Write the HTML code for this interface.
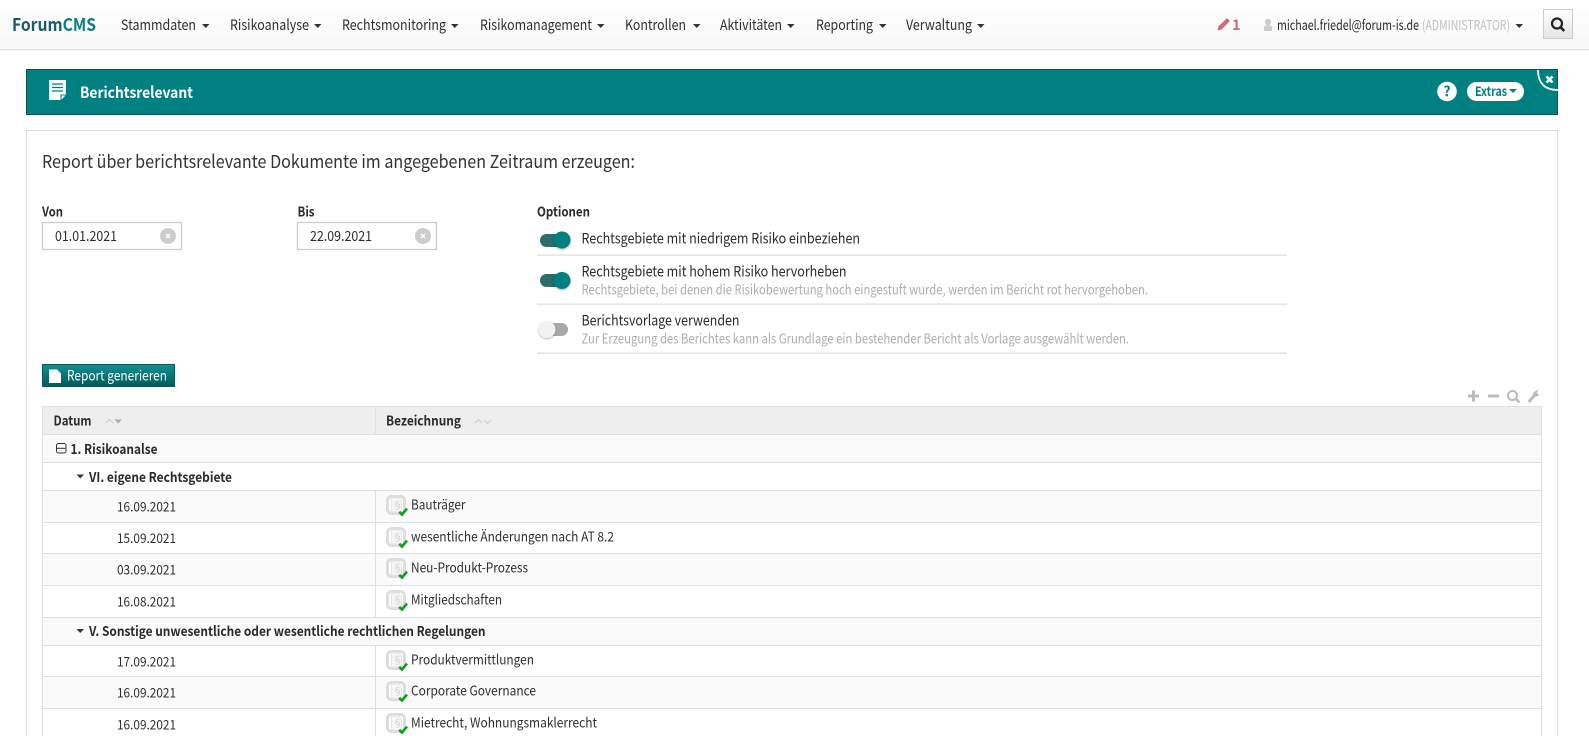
<!DOCTYPE html>
<html lang="de"><head><meta charset="utf-8"><title>Berichtsrelevant</title>
<style>
html,body{margin:0;padding:0;background:#fff;width:1589px;height:736px;overflow:hidden}
svg{display:block}
text{font-family:"Noto Sans CJK JP","Liberation Sans",sans-serif;fill:#2b2b2b;font-size:14px;white-space:pre}
.b{font-weight:700}
.nav{font-size:14.5px;fill:#2f2f2f}
.sub{font-size:13.5px;fill:#adadad}
.opt{font-size:14.5px;fill:#2b2b2b}
.th{font-weight:700;font-size:13.5px;fill:#2b2b2b}
.td{font-size:13.5px;fill:#2f2f2f}
</style></head><body>
<svg width="1589" height="736" viewBox="0 0 1589 736" xmlns="http://www.w3.org/2000/svg">
<defs>
<linearGradient id="n" x1="0" y1="0" x2="0" y2="1"><stop offset="0" stop-color="#fff"/><stop offset="1" stop-color="#f7f7f7"/></linearGradient>
<linearGradient id="s" x1="0" y1="0" x2="0" y2="1"><stop offset="0" stop-color="#fff"/><stop offset="1" stop-color="#e4e4e4"/></linearGradient>
<linearGradient id="g" x1="0" y1="0" x2="0" y2="1"><stop offset="0" stop-color="#129090"/><stop offset="1" stop-color="#005a5a"/></linearGradient>
<filter id="sh" x="-30%" y="-30%" width="160%" height="160%"><feDropShadow dx="0" dy="1" stdDeviation="1" flood-color="#000" flood-opacity=".3"/></filter>
<g id="doc">
<rect x="1.500" y="1.500" width="17" height="17" rx="4" fill="#fff" stroke="#ddd" stroke-width="3"/>
<path d="M5.500 3h7l3 3v11h-10z" fill="#f6f6f6" stroke="#e6e6e6"/>
<path d="M13.200 16.800l2.800 2.800 5-6" fill="none" stroke="#0aa01e" stroke-width="2.600"/>
</g>
</defs>

<!-- navbar -->
<rect width="1589" height="49" fill="url(#n)"/>
<rect y="49" width="1589" height="1" fill="#e3e3e3"/>
<rect y="50" width="1589" height="1" fill="#f5f5f5"/>
<text x="12" y="31" class="b" style="font-size:17.500px" textLength="84" lengthAdjust="spacingAndGlyphs"><tspan style="fill:#1d5a69">Forum</tspan><tspan style="fill:#0a7f7f">CMS</tspan></text>
<text x="121" y="30" class="nav" textLength="75" lengthAdjust="spacingAndGlyphs">Stammdaten</text><path d="M202 24h7.500l-3.750 4z" fill="#333"/>
<text x="230" y="30" class="nav" textLength="79" lengthAdjust="spacingAndGlyphs">Risikoanalyse</text><path d="M314 24h7.500l-3.750 4z" fill="#333"/>
<text x="342" y="30" class="nav" textLength="104" lengthAdjust="spacingAndGlyphs">Rechtsmonitoring</text><path d="M451 24h7.500l-3.750 4z" fill="#333"/>
<text x="480" y="30" class="nav" textLength="112" lengthAdjust="spacingAndGlyphs">Risikomanagement</text><path d="M597 24h7.500l-3.750 4z" fill="#333"/>
<text x="625" y="30" class="nav" textLength="61" lengthAdjust="spacingAndGlyphs">Kontrollen</text><path d="M693 24h7.500l-3.750 4z" fill="#333"/>
<text x="720" y="30" class="nav" textLength="62" lengthAdjust="spacingAndGlyphs">Aktivitäten</text><path d="M787 24h7.500l-3.750 4z" fill="#333"/>
<text x="816" y="30" class="nav" textLength="57" lengthAdjust="spacingAndGlyphs">Reporting</text><path d="M879 24h7.500l-3.750 4z" fill="#333"/>
<text x="906" y="30" class="nav" textLength="66" lengthAdjust="spacingAndGlyphs">Verwaltung</text><path d="M977 24h7.500l-3.750 4z" fill="#333"/>

<!-- right nav -->
<path d="M1217.500 30.500l1-4 7.500-7.500q1-1 2 0l1 1q1 1 0 2l-7.500 7.500z" fill="#cf6b6f"/>
<text x="1232" y="30" class="b" style="font-size:14.500px;fill:#cf6b6f">1</text>
<circle cx="1268" cy="22" r="3.200" fill="#ccc"/><path d="M1264 31v-3q0-3 4-3t4 3v3z" fill="#ccc"/>
<text x="1277" y="30" style="font-size:14px;fill:#2b2b2b" textLength="142" lengthAdjust="spacingAndGlyphs">michael.friedel@forum-is.de</text>
<text x="1422" y="30" style="font-size:13.500px;fill:#c2c2c2" textLength="88" lengthAdjust="spacingAndGlyphs">(ADMINISTRATOR)</text>
<path d="M1515.500 24h7.500l-3.750 4z" fill="#333"/>
<rect x="1543.500" y="9.500" width="29" height="29" fill="url(#s)" stroke="#ccc"/>
<circle cx="1557" cy="23.500" r="5" fill="none" stroke="#222" stroke-width="2.200"/><path d="M1560.500 27.200l3.800 3.800" stroke="#222" stroke-width="2.600"/>

<!-- teal header -->
<rect x="26.500" y="69.500" width="1531" height="45" fill="#008080" stroke="#0b4f4f"/>
<path d="M49 80h17v15l-5 5H49z" fill="#fff"/>
<path d="M52 84h11M52 87.500h11M52 91h11" stroke="#008080" stroke-width="1.300"/>
<path d="M61 100v-5h5" fill="none" stroke="#008080"/>
<text x="80" y="98" class="b" style="font-size:15.500px;fill:#fff" textLength="113" lengthAdjust="spacingAndGlyphs">Berichtsrelevant</text>
<circle cx="1447" cy="91.500" r="9.800" fill="#fff"/>
<text x="1447" y="96.500" class="b" text-anchor="middle" style="font-size:14px;fill:#008080">?</text>
<rect x="1467" y="82" width="57" height="19" rx="9.500" fill="#fff"/>
<text x="1475" y="96" class="b" style="font-size:13px;fill:#008080" textLength="32" lengthAdjust="spacingAndGlyphs">Extras</text>
<path d="M1509 89h8l-4 4z" fill="#008080"/>
<path d="M1538 70q0 20 20 20" fill="none" stroke="#fff" stroke-width="1.800"/>
<path d="M1546.500 76.500l6 6M1552.500 76.500l-6 6" stroke="#fff" stroke-width="2.600"/>

<!-- panel -->
<rect x="26.500" y="130.500" width="1531" height="620" fill="#fff" stroke="#ddd"/>
<text x="42" y="168" style="font-size:18px;fill:#333" textLength="593" lengthAdjust="spacingAndGlyphs">Report über berichtsrelevante Dokumente im angegebenen Zeitraum erzeugen:</text>

<text x="42" y="216.500" class="b" style="font-size:13.500px" textLength="21" lengthAdjust="spacingAndGlyphs">Von</text>
<rect x="42.500" y="222.500" width="139" height="27" fill="#fff" stroke="#ccc" stroke-width="1.300"/>
<text x="55" y="241" style="font-size:14px" textLength="62" lengthAdjust="spacingAndGlyphs">01.01.2021</text>
<circle cx="168" cy="236" r="8" fill="#ccc"/><path d="M166 234l4 4M170 234l-4 4" stroke="#fff" stroke-width="1.500"/>

<text x="297.500" y="216.500" class="b" style="font-size:13.500px" textLength="17" lengthAdjust="spacingAndGlyphs">Bis</text>
<rect x="297.500" y="222.500" width="139" height="27" fill="#fff" stroke="#ccc" stroke-width="1.300"/>
<text x="310" y="241" style="font-size:14px" textLength="62" lengthAdjust="spacingAndGlyphs">22.09.2021</text>
<circle cx="423" cy="236" r="8" fill="#ccc"/><path d="M421 234l4 4M425 234l-4 4" stroke="#fff" stroke-width="1.500"/>

<!-- options -->
<text x="537" y="216.500" class="b" style="font-size:13.500px" textLength="53" lengthAdjust="spacingAndGlyphs">Optionen</text>

<rect x="540" y="234" width="26" height="13" rx="6.500" fill="#2e6b6b"/>
<circle cx="562" cy="240" r="8.500" fill="#008080" filter="url(#sh)"/>
<text x="581.500" y="243.500" class="opt" textLength="278.500" lengthAdjust="spacingAndGlyphs">Rechtsgebiete mit niedrigem Risiko einbeziehen</text>
<rect x="537" y="254.500" width="750" height="1.200" fill="#ddd"/>

<rect x="540" y="274" width="26" height="13" rx="6.500" fill="#2e6b6b"/>
<circle cx="562" cy="280.500" r="8.500" fill="#008080" filter="url(#sh)"/>
<text x="581.500" y="276.500" class="opt" textLength="265" lengthAdjust="spacingAndGlyphs">Rechtsgebiete mit hohem Risiko hervorheben</text>
<text x="581.500" y="294.500" class="sub" textLength="566.500" lengthAdjust="spacingAndGlyphs">Rechtsgebiete, bei denen die Risikobewertung hoch eingestuft wurde, werden im Bericht rot hervorgehoben.</text>
<rect x="537" y="303.500" width="750" height="1.200" fill="#ddd"/>

<rect x="546" y="323" width="22" height="13" rx="6.500" fill="#a8a8a8"/>
<circle cx="547" cy="329.500" r="8.500" fill="#f2f2f2" filter="url(#sh)"/>
<text x="581.500" y="325.500" class="opt" textLength="158" lengthAdjust="spacingAndGlyphs">Berichtsvorlage verwenden</text>
<text x="581.500" y="343.500" class="sub" textLength="547.500" lengthAdjust="spacingAndGlyphs">Zur Erzeugung des Berichtes kann als Grundlage ein bestehender Bericht als Vorlage ausgewählt werden.</text>
<rect x="537" y="352.500" width="750" height="1.200" fill="#ddd"/>

<!-- button -->
<rect x="42.500" y="364.500" width="132" height="22" fill="url(#g)" stroke="#0b5a5a"/>
<path d="M49 369.500h8l4 4v9.500H49z" fill="#fff"/>
<text x="67" y="380.500" style="font-size:14px;fill:#fff" textLength="100" lengthAdjust="spacingAndGlyphs">Report generieren</text>

<!-- tools -->
<path d="M1468 396h11M1473.500 390.500v11" stroke="#bbb" stroke-width="3"/>
<path d="M1488 396h11" stroke="#bbb" stroke-width="3"/>
<circle cx="1512.500" cy="395.500" r="4.500" fill="none" stroke="#bbb" stroke-width="2"/><path d="M1516 399l3.500 3.500" stroke="#bbb" stroke-width="2.500"/>
<path d="M1528.500 402l6-6.500" stroke="#bbb" stroke-width="3"/><path d="M1533 396q-1-5 6-6l-2.500 3 2.500 1.500q-1 3-6 1.500z" fill="#bbb"/>

<!-- table -->
<rect x="42.500" y="406.500" width="1499" height="340" fill="#fff"/>
<rect x="42" y="406" width="1500" height="28" fill="#eee"/>
<rect x="42" y="434" width="1500" height="28" fill="#fafafa"/>
<rect x="42" y="490" width="1500" height="32" fill="#fafafa"/>
<rect x="42" y="553" width="1500" height="32" fill="#fafafa"/>
<rect x="42" y="617" width="1500" height="28" fill="#fafafa"/>
<rect x="42" y="676" width="1500" height="32" fill="#fafafa"/>
<g fill="#e0e0e0">
<rect x="42" y="406" width="1500" height="1"/><rect x="42" y="434" width="1500" height="1"/><rect x="42" y="462" width="1500" height="1"/><rect x="42" y="490" width="1500" height="1"/><rect x="42" y="522" width="1500" height="1"/><rect x="42" y="553" width="1500" height="1"/><rect x="42" y="585" width="1500" height="1"/><rect x="42" y="617" width="1500" height="1"/><rect x="42" y="645" width="1500" height="1"/><rect x="42" y="676" width="1500" height="1"/><rect x="42" y="708" width="1500" height="1"/>
<rect x="42" y="406" width="1" height="330"/><rect x="1541" y="406" width="1" height="330"/>
<rect x="375" y="406" width="1" height="29"/><rect x="375" y="490" width="1" height="127"/><rect x="375" y="645" width="1" height="91"/>
</g>

<text x="53.500" y="425.500" class="th" textLength="38" lengthAdjust="spacingAndGlyphs">Datum</text>
<path d="M106 423l3.500-3.500 3.500 3.500" fill="none" stroke="#ccc"/><path d="M114.500 419.500h7.500l-3.750 4z" fill="#aaa"/>
<text x="386" y="425.500" class="th" textLength="75" lengthAdjust="spacingAndGlyphs">Bezeichnung</text>
<path d="M475 423l3.500-3.500 3.500 3.500M484 420l3.500 3.500 3.500-3.500" fill="none" stroke="#ccc"/>

<rect x="56.500" y="443.500" width="9.500" height="9.500" rx="2" fill="none" stroke="#333"/><path d="M57 448.300h9" stroke="#333"/>
<text x="70.500" y="454" class="th" textLength="87" lengthAdjust="spacingAndGlyphs">1. Risikoanalse</text>
<path d="M76.500 474.500h7.500l-3.750 4z" fill="#333"/>
<text x="89" y="482" class="th" textLength="143" lengthAdjust="spacingAndGlyphs">VI. eigene Rechtsgebiete</text>

<text x="117" y="511.500" class="td" textLength="59" lengthAdjust="spacingAndGlyphs">16.09.2021</text>
<use href="#doc" x="386" y="495"/><text x="392.500" y="509" style="font-size:10px;fill:#d0d0d0">§</text>
<text x="411" y="509.500" class="td" textLength="54.500" lengthAdjust="spacingAndGlyphs">Bauträger</text>

<text x="117" y="543" class="td" textLength="59" lengthAdjust="spacingAndGlyphs">15.09.2021</text>
<use href="#doc" x="386" y="527"/><text x="392.500" y="541" style="font-size:10px;fill:#d0d0d0">§</text>
<text x="411" y="541.500" class="td" textLength="203" lengthAdjust="spacingAndGlyphs">wesentliche Änderungen nach AT 8.2</text>

<text x="117" y="574.500" class="td" textLength="59" lengthAdjust="spacingAndGlyphs">03.09.2021</text>
<use href="#doc" x="386" y="558"/><text x="392.500" y="572" style="font-size:10px;fill:#d0d0d0">§</text>
<text x="411" y="572.500" class="td" textLength="117" lengthAdjust="spacingAndGlyphs">Neu-Produkt-Prozess</text>

<text x="117" y="606.500" class="td" textLength="59" lengthAdjust="spacingAndGlyphs">16.08.2021</text>
<use href="#doc" x="386" y="590"/><text x="392.500" y="604" style="font-size:10px;fill:#d0d0d0">§</text>
<text x="411" y="604.500" class="td" textLength="91" lengthAdjust="spacingAndGlyphs">Mitgliedschaften</text>

<path d="M76.500 629h7.500l-3.750 4z" fill="#333"/>
<text x="89" y="636" class="th" textLength="396.500" lengthAdjust="spacingAndGlyphs">V. Sonstige unwesentliche oder wesentliche rechtlichen Regelungen</text>

<text x="117" y="666.500" class="td" textLength="59" lengthAdjust="spacingAndGlyphs">17.09.2021</text>
<use href="#doc" x="386" y="650"/><text x="392.500" y="664" style="font-size:10px;fill:#d0d0d0">§</text>
<text x="411" y="664.500" class="td" textLength="123" lengthAdjust="spacingAndGlyphs">Produktvermittlungen</text>

<text x="117" y="697.500" class="td" textLength="59" lengthAdjust="spacingAndGlyphs">16.09.2021</text>
<use href="#doc" x="386" y="681"/><text x="392.500" y="695" style="font-size:10px;fill:#d0d0d0">§</text>
<text x="411" y="695.500" class="td" textLength="125" lengthAdjust="spacingAndGlyphs">Corporate Governance</text>

<text x="117" y="729.500" class="td" textLength="59" lengthAdjust="spacingAndGlyphs">16.09.2021</text>
<use href="#doc" x="386" y="713"/><text x="392.500" y="727" style="font-size:10px;fill:#d0d0d0">§</text>
<text x="411" y="727.500" class="td" textLength="186" lengthAdjust="spacingAndGlyphs">Mietrecht, Wohnungsmaklerrecht</text>
</svg>
</body></html>
